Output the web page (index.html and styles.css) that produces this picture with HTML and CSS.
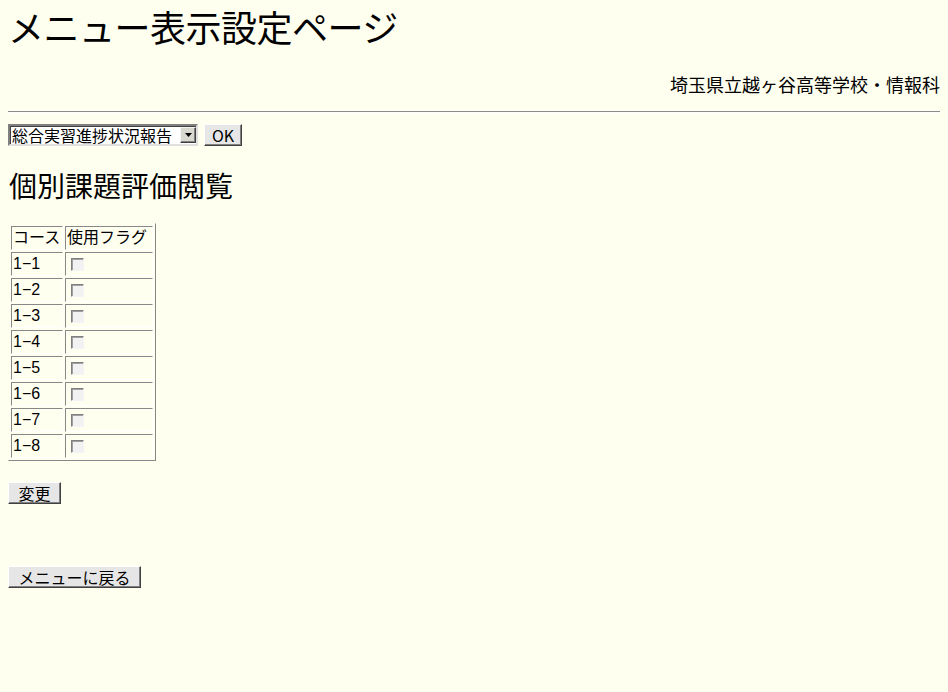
FILE: index.html
```html
<!DOCTYPE html>
<html lang="ja">
<head>
<meta charset="utf-8">
<title>メニュー表示設定ページ</title>
<link rel="stylesheet" href="styles.css">
</head>
<body>
<h1 class="title">メニュー表示設定ページ</h1>
<p class="school">埼玉県立越ヶ谷高等学校・情報科</p>
<hr class="rule">
<form class="menu-form">
  <div class="select-box">
    <span class="select-text">総合実習進捗状況報告</span>
    <span class="select-arrow"><svg width="7" height="4" viewBox="0 0 7 4"><path d="M0 0H7L3.5 4Z" fill="#000"/></svg></span>
  </div>
  <button type="button" class="btn btn-ok">OK</button>
</form>
<h2 class="subtitle">個別課題評価閲覧</h2>
<table class="flags">
  <tr><td class="c1">コース</td><td class="c2">使用フラグ</td></tr>
  <tr><td class="c1">1−1</td><td class="c2"><span class="check"></span></td></tr>
  <tr><td class="c1">1−2</td><td class="c2"><span class="check"></span></td></tr>
  <tr><td class="c1">1−3</td><td class="c2"><span class="check"></span></td></tr>
  <tr><td class="c1">1−4</td><td class="c2"><span class="check"></span></td></tr>
  <tr><td class="c1">1−5</td><td class="c2"><span class="check"></span></td></tr>
  <tr><td class="c1">1−6</td><td class="c2"><span class="check"></span></td></tr>
  <tr><td class="c1">1−7</td><td class="c2"><span class="check"></span></td></tr>
  <tr><td class="c1">1−8</td><td class="c2"><span class="check"></span></td></tr>
</table>
<div class="change-row"><button type="button" class="btn btn-change">変更</button></div>
<div class="back-row"><button type="button" class="btn btn-back">メニューに戻る</button></div>
</body>
</html>
```
FILE: styles.css
```css
html, body {
  background: #fffff0;
}
body {
  margin: 8px;
  font-family: "Noto Sans CJK JP", "Noto Sans", sans-serif;
  font-size: 16px;
  color: #000;
}
.title {
  margin: 0;
  font-size: 36px;
  line-height: 36px;
  letter-spacing: -0.5px;
  font-weight: normal;
}
.school {
  margin: 30px 0 0;
  text-align: right;
  font-size: 18px;
  line-height: 20px;
}
.rule {
  margin: 17px 0 0;
  height: 0;
  border: 0;
  border-top: 1px solid #8c8c8c;
  border-bottom: 1px solid #ffffff;
}
.menu-form {
  margin: 11px 0 0;
  display: flex;
  align-items: center;
  gap: 6px;
  height: 22px;
}
.select-box {
  box-sizing: border-box;
  width: 190px;
  height: 22px;
  display: flex;
  align-items: center;
  background: #fff;
  border: 2px solid;
  border-color: #808080 #e0e0e0 #e0e0e0 #808080;
  box-shadow: inset 1px 1px 0 #404040;
  padding: 0 0 0 2px;
}
.select-text {
  flex: 1;
  font-size: 16px;
  line-height: 18px;
  white-space: nowrap;
}
.select-arrow {
  box-sizing: border-box;
  width: 16px;
  height: 16px;
  display: flex;
  align-items: center;
  justify-content: center;
  background: #d8d8d0;
  border: 1px solid;
  border-color: #f4f4f4 #404040 #404040 #f4f4f4;
  box-shadow: inset -1px -1px 0 #808080;
}
.btn {
  box-sizing: border-box;
  height: 22px;
  margin: 0;
  padding: 0;
  font-family: "Noto Sans CJK JP", sans-serif;
  font-size: 16px;
  line-height: 18px;
  color: #000;
  background: #e6e6e6;
  border: 1px solid;
  border-color: #ffffff #404040 #404040 #ffffff;
  box-shadow: inset -1px -1px 0 #808080;
  border-radius: 0;
}
.btn-ok {
  width: 38px;
}
.btn-change {
  width: 53px;
}
.btn-back {
  width: 133px;
}
.subtitle {
  margin: 25px 0 0 1px;
  font-size: 28px;
  line-height: 28px;
  font-weight: normal;
}
.flags {
  margin: 24px 0 0;
  border-collapse: separate;
  border-spacing: 2px;
  border: 1px solid;
  border-color: #fffff0 #888888 #888888 #fffff0;
}
.flags td {
  box-sizing: border-box;
  height: 24px;
  padding: 0 1px;
  font-family: "Liberation Sans", "Noto Sans CJK JP", sans-serif;
  font-size: 16px;
  line-height: 20px;
  border: 1px solid;
  border-color: #888888 #ffffff #ffffff #888888;
  vertical-align: middle;
  white-space: nowrap;
}
.c1 {
  width: 52px;
}
.c2 {
  width: 88px;
}
.check {
  display: block;
  box-sizing: border-box;
  width: 13px;
  height: 13px;
  margin: 0 0 0 4px;
  background: #f2f2f2;
  border: 1px solid;
  border-color: #808080 #f4f4f4 #f4f4f4 #808080;
  box-shadow: inset 1px 1px 0 #a0a0a0;
}
.change-row {
  margin-top: 21px;
  display: flex;
}
.back-row {
  margin-top: 62px;
  display: flex;
}
```
